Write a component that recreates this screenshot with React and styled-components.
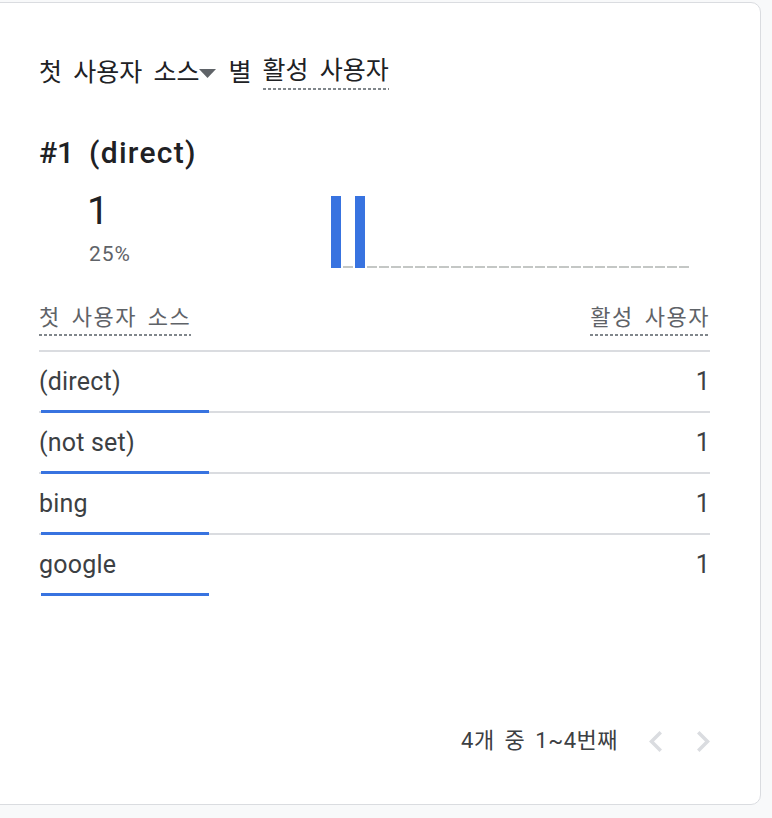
import React from "react";
import styled, { createGlobalStyle } from "styled-components";

const GlobalStyle = createGlobalStyle`
  html, body {
    margin: 0;
    background: #f8f9fa;
  }

  body {
    font-family: "Roboto", "Noto Sans CJK KR", sans-serif;
    color: #202124;
  }
`;

const dashed = `
  background-image: repeating-linear-gradient(
    to right,
    #80868b 0 3px,
    transparent 3px 5px
  );
  background-size: 100% 2px;
  background-repeat: no-repeat;
  background-position: left bottom;
`;

const Card = styled.div`
  box-sizing: border-box;
  width: 771px;
  height: 803px;
  margin: 2px 0 0 -10px;
  padding: 53px 50px 49px 48px;
  background: #fff;
  border: 1px solid #dadce0;
  border-radius: 10px;
  display: flex;
  flex-direction: column;
`;

const Title = styled.h2`
  margin: 0;
  font-size: 25px;
  font-weight: 400;
  line-height: 32px;
  word-spacing: 5px;
  display: flex;
  align-items: center;
  white-space: pre;
`;

const Caret = styled.svg`
  width: 17px;
  height: 9px;
  margin: 0 12px 0 0;
  fill: #5f6368;
`;

const Metric = styled.span`
  display: inline-block;
  padding-bottom: 4px;
  line-height: 30px;
  ${dashed}
`;

const Rank = styled.div`
  margin-top: 45px;
  display: grid;
  grid-template-columns: 50px auto;
  font-size: 30px;
  font-weight: 500;
  line-height: 36px;
`;

const RankName = styled.span`
  letter-spacing: 1.3px;
`;

const Summary = styled.div`
  margin-top: 18px;
  display: flex;
  align-items: flex-start;
  padding-left: 48px;
`;

const Stats = styled.div`
  width: 244px;
  display: flex;
  flex-direction: column;
`;

const BigNumber = styled.div`
  font-size: 39px;
  line-height: 44px;
`;

const Percent = styled.div`
  margin-top: 9px;
  padding-left: 2px;
  font-size: 21px;
  line-height: 24px;
  letter-spacing: 1px;
  color: #5f6368;
`;

const Chart = styled.div`
  margin-top: 7px;
  width: 358px;
  height: 72px;
  display: flex;
  align-items: flex-end;
  gap: 2px;
`;

const Slot = styled.div`
  width: 10px;
  flex: none;
  height: ${(p) => (p.$filled ? "72px" : "2px")};
  background: ${(p) => (p.$filled ? "#3873e0" : "#c4c7c5")};
`;

const TableHead = styled.div`
  margin-top: 36px;
  display: flex;
  justify-content: space-between;
  align-items: flex-end;
  padding-bottom: 14px;
  border-bottom: 2px solid #dadce0;
  font-size: 22px;
  letter-spacing: 1.5px;
  word-spacing: 4px;
  color: #5f6368;
`;

const HeadLabel = styled.span`
  line-height: 28px;
  padding-bottom: 4px;
  ${dashed}
`;

const Row = styled.div`
  display: flex;
  flex-direction: column;
  padding-top: 16px;
`;

const RowLine = styled.div`
  display: flex;
  justify-content: space-between;
  font-size: 25px;
  line-height: 28px;
  letter-spacing: 0.2px;
  color: #3c4043;
`;

const Track = styled.div`
  margin-top: 14px;
  height: 3px;
  display: flex;
  align-items: flex-end;
`;

const TrackEdge = styled.div`
  width: 2px;
  height: 2px;
  background: ${(p) => (p.$hidden ? "transparent" : "#dadce0")};
`;

const Fill = styled.div`
  height: 3px;
  background: #3873e0;
`;

const TrackRest = styled.div`
  flex: 1;
  height: 2px;
  background: ${(p) => (p.$hidden ? "transparent" : "#dadce0")};
`;

const Footer = styled.div`
  margin-top: auto;
  display: flex;
  justify-content: flex-end;
  align-items: center;
  font-size: 22px;
  line-height: 28px;
  letter-spacing: 0.5px;
  word-spacing: 4px;
  color: #3c4043;
`;

const PageInfo = styled.span`
  margin-right: 31px;
`;

const PageButton = styled.button`
  padding: 0;
  border: none;
  background: transparent;
  display: flex;
  cursor: default;

  & + & {
    margin-left: 35px;
  }

  svg {
    width: 13px;
    height: 21px;
    fill: #dadce0;
  }
`;

const rows = [
  { source: "(direct)", users: 1 },
  { source: "(not set)", users: 1 },
  { source: "bing", users: 1 },
  { source: "google", users: 1 },
];

const slots = Array.from({ length: 30 }, (_, i) => i === 0 || i === 2);

const App = () => {
  return (
    <>
      <GlobalStyle />
      <Card>
        <Title>
          첫 사용자 소스
          <Caret viewBox="0 0 17 9">
            <path d="M0 0h17L8.5 9z" />
          </Caret>
          {"별 "}
          <Metric>활성 사용자</Metric>
        </Title>

        <Rank>
          <span>#1</span>
          <RankName>(direct)</RankName>
        </Rank>

        <Summary>
          <Stats>
            <BigNumber>1</BigNumber>
            <Percent>25%</Percent>
          </Stats>
          <Chart>
            {slots.map((filled, i) => (
              <Slot key={i} $filled={filled} />
            ))}
          </Chart>
        </Summary>

        <TableHead>
          <HeadLabel>첫 사용자 소스</HeadLabel>
          <HeadLabel>활성 사용자</HeadLabel>
        </TableHead>

        {rows.map((row, i) => {
          const last = i === rows.length - 1;
          return (
            <Row key={row.source}>
              <RowLine>
                <span>{row.source}</span>
                <span>{row.users}</span>
              </RowLine>
              <Track>
                <TrackEdge $hidden={last} />
                <Fill style={{ width: `${(row.users / 4) * 672}px` }} />
                <TrackRest $hidden={last} />
              </Track>
            </Row>
          );
        })}

        <Footer>
          <PageInfo>4개 중 1~4번째</PageInfo>
          <PageButton aria-label="이전">
            <svg viewBox="8 6 7.41 12">
              <path d="M15.41 7.41L14 6l-6 6 6 6 1.41-1.41L10.83 12z" />
            </svg>
          </PageButton>
          <PageButton aria-label="다음">
            <svg viewBox="8.59 6 7.41 12">
              <path d="M10 6L8.59 7.41 13.17 12l-4.58 4.59L10 18l6-6z" />
            </svg>
          </PageButton>
        </Footer>
      </Card>
    </>
  );
};

export default App;
